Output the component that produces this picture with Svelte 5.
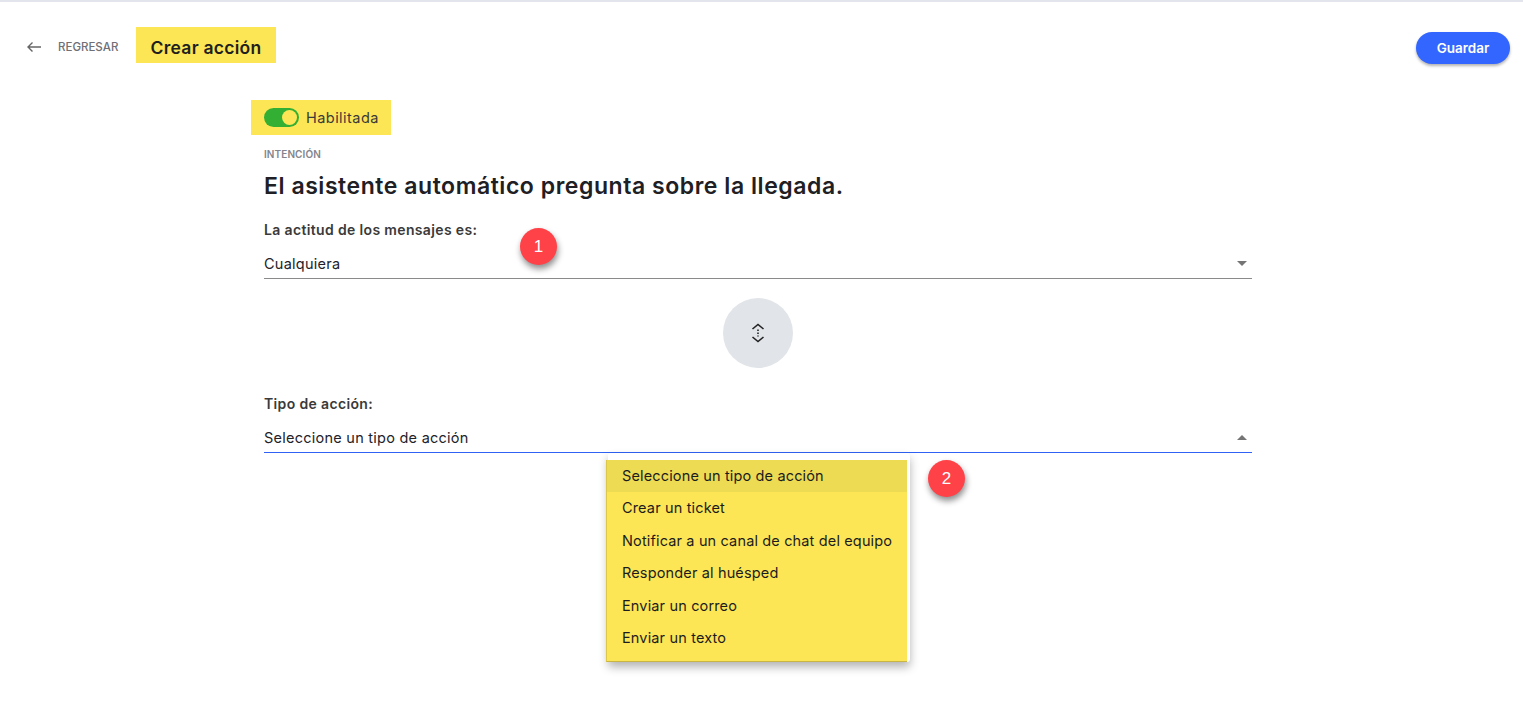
<script>
  const options = [
    "Seleccione un tipo de acción",
    "Crear un ticket",
    "Notificar a un canal de chat del equipo",
    "Responder al huésped",
    "Enviar un correo",
    "Enviar un texto",
  ];
</script>

<div class="topline"></div>
<header>
  <div class="left">
    <button class="back" aria-label="Regresar">
      <svg width="16" height="12" viewBox="0 0 16 12">
        <path d="M15 6H2M6.5 1.5 2 6l4.5 4.5" fill="none" stroke="#666" stroke-width="1.4" />
      </svg>
    </button>
    <span class="regresar">REGRESAR</span>
    <h1>Crear acción</h1>
  </div>
  <button class="save">Guardar</button>
</header>

<main>
  <div class="toggle-row">
    <span class="toggle"><span class="knob"></span></span>
    <span>Habilitada</span>
  </div>

  <div class="content">
    <div class="overline">INTENCIÓN</div>
    <h2>El asistente automático pregunta sobre la llegada.</h2>

    <div class="field first">
      <div class="label">La actitud de los mensajes es:</div>
      <div class="select">
        <span>Cualquiera</span>
        <span class="arrow down"></span>
      </div>
      <span class="badge one">1</span>
    </div>

    <div class="swap-row">
      <div class="swap">
        <svg width="14" height="20" viewBox="0 0 14 20">
          <path d="M1.5 6 7 1.5 12.5 6M1.5 14 7 18.5 12.5 14" fill="none" stroke="#222" stroke-width="1.6" />
          <path d="M7 6.5v7" fill="none" stroke="#222" stroke-width="1.6" stroke-dasharray="1.5 1.5" />
        </svg>
      </div>
    </div>

    <div class="field second">
      <div class="label">Tipo de acción:</div>
      <div class="select open">
        <span>Seleccione un tipo de acción</span>
        <span class="arrow up"></span>
      </div>
      <div class="menu">
        <ul>
          {#each options as o, i}
            <li class:active={i === 0}>{o}</li>
          {/each}
        </ul>
      </div>
      <span class="badge two">2</span>
    </div>
  </div>
</main>

<style>
  :global(body) {
    margin: 0;
    background: #fff;
    font-family: "Inter", "Open Sans", sans-serif;
    color: #222;
  }

  .topline {
    height: 2px;
    background: #e3e5ec;
  }

  header {
    display: flex;
    justify-content: space-between;
    align-items: flex-start;
    padding: 25px 13px 0 26px;
  }

  .left {
    display: flex;
    align-items: center;
  }

  .back {
    border: none;
    background: none;
    padding: 0;
    display: flex;
    margin: 4px 16px 0 0;
  }

  .regresar {
    font-size: 11.5px;
    font-weight: 500;
    color: #6f6f76;
    width: 61px;
    margin: 4px 17px 0 0;
    white-space: nowrap;
  }

  h1 {
    margin: 0;
    background: #fde655;
    font-size: 17.5px;
    letter-spacing: 0.25px;
    font-weight: 600;
    color: #1f1f1f;
    height: 36px;
    line-height: 41px;
    width: 140px;
    text-align: center;
    white-space: nowrap;
  }

  .save {
    width: 94px;
    height: 32px;
    margin-top: 5px;
    border: none;
    border-radius: 16px;
    background: #3366ff;
    color: #fff;
    font-family: inherit;
    font-size: 13.5px;
    font-weight: 600;
    box-shadow: 0 2px 3px rgba(0, 0, 0, 0.3);
  }

  main {
    padding: 36px 0 0 251px;
    width: 1001px;
    min-height: 600px;
  }

  .toggle-row {
    display: flex;
    align-items: center;
    gap: 7px;
    width: 127px;
    height: 35px;
    padding-left: 13px;
    background: #fde655;
    font-size: 14.5px;
    letter-spacing: 0.45px;
    color: #3a3a3a;
  }

  .toggle {
    width: 35px;
    height: 19px;
    border-radius: 10px;
    background: #33b034;
    display: flex;
    justify-content: flex-end;
    align-items: center;
    padding-right: 2px;
    box-sizing: border-box;
  }

  .knob {
    width: 15px;
    height: 15px;
    border-radius: 50%;
    background: #fde655;
  }

  .content {
    padding-left: 13px;
  }

  .overline {
    margin-top: 13px;
    font-size: 10px;
    letter-spacing: 0.1px;
    line-height: 13px;
    font-weight: 600;
    color: #84848c;
  }

  h2 {
    margin: 11px 0 0;
    font-size: 23px;
    letter-spacing: 0.55px;
    line-height: 28px;
    font-weight: 600;
    color: #202024;
    white-space: nowrap;
  }

  .field {
    position: relative;
  }

  .field.first {
    margin-top: 20px;
  }

  .label {
    font-size: 14px;
    letter-spacing: 0.35px;
    line-height: 20px;
    font-weight: 600;
    color: #3a3a3a;
  }

  .select {
    display: flex;
    justify-content: space-between;
    align-items: center;
    height: 38px;
    margin-top: 1px;
    padding: 8px 5px 0 0;
    box-sizing: border-box;
    border-bottom: 1px solid #8a8a8a;
    font-size: 14.5px;
    letter-spacing: 0.25px;
    color: #22222a;
  }

  .select.open {
    border-bottom-color: #2f62f5;
  }

  .arrow {
    width: 0;
    height: 0;
    border-left: 5px solid transparent;
    border-right: 5px solid transparent;
  }

  .arrow.down {
    border-top: 5px solid #757575;
  }

  .arrow.up {
    border-bottom: 5px solid #757575;
  }

  .swap-row {
    display: flex;
    justify-content: center;
    margin-top: 19px;
  }

  .swap {
    width: 70px;
    height: 70px;
    border-radius: 50%;
    background: #e1e4e8;
    display: flex;
    align-items: center;
    justify-content: center;
  }

  .field.second {
    margin-top: 26px;
  }

  .menu {
    position: absolute;
    top: 59px;
    left: 344px;
    width: 302px;
    height: 209px;
    background: #fff;
    border-radius: 3px;
    box-shadow: 0 5px 10px rgba(0, 0, 0, 0.3);
  }

  ul {
    position: absolute;
    top: 7px;
    left: -2px;
    width: 301px;
    height: 202px;
    margin: 0;
    padding: 0;
    list-style: none;
    background: #fde655;
    box-sizing: border-box;
    border-left: 1px solid #dcc748;
    border-bottom: 1px solid #c9b541;
  }

  li {
    height: 32.4px;
    line-height: 32px;
    padding-left: 15px;
    font-size: 14.5px;
    letter-spacing: 0.15px;
    color: #1c1c20;
    white-space: nowrap;
  }

  li.active {
    background: #ecdb53;
  }

  .badge {
    position: absolute;
    width: 37px;
    height: 37px;
    border-radius: 50%;
    background: #ff4148;
    color: #fff;
    font-family: "Liberation Sans", sans-serif;
    font-size: 17px;
    display: flex;
    align-items: center;
    justify-content: center;
    box-shadow: 1px 4px 6px rgba(0, 0, 0, 0.45);
  }

  .badge.one {
    left: 256px;
    top: 8px;
  }

  .badge.two {
    left: 664px;
    top: 66px;
  }
</style>
